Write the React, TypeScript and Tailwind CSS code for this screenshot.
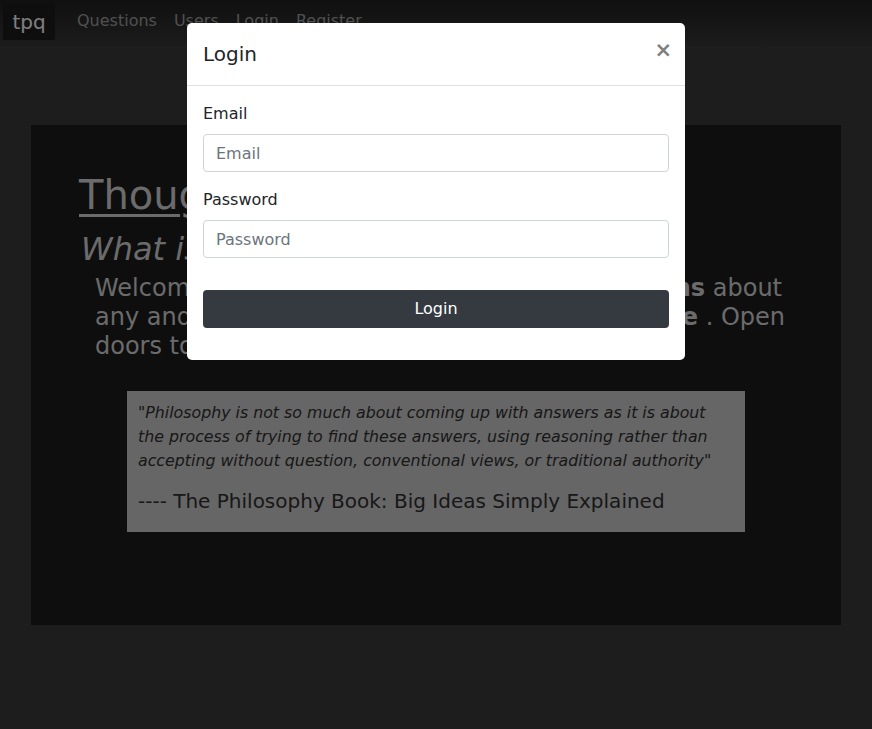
import React from "react";

export default function App() {
  const font = { fontFamily: '"DejaVu Sans", sans-serif' };
  return (
    <div className="relative min-h-[729px] bg-[#3a3a3a]" style={font}>
      {/* Navbar */}
      <nav className="flex h-[46px] items-start bg-gradient-to-b from-[#202020] to-[#383838] pl-[3px] pt-[3px]">
        <div className="flex h-[37px] w-[52px] items-center justify-center bg-[#1c1c1c] text-[20px] text-white">
          tpq
        </div>
        <div className="ml-[22px] flex items-center gap-[17px] pt-[6px] text-[16px] font-medium leading-[24px] text-[#a0a0a0]">
          <span>Questions</span>
          <span>Users</span>
          <span>Login</span>
          <span>Register</span>
        </div>
      </nav>

      {/* Jumbotron */}
      <div className="mx-[31px] mt-[79px] h-[500px] bg-[#1c1c1c] pt-[46px] text-[#d6d6d6]">
        <h1 className="pl-[48px] text-[40px] leading-[48px] underline decoration-[3px] underline-offset-[5px]">
          Thought Provoking Questions
        </h1>
        <h2 className="mt-[11px] pl-[50px] text-[32px] italic leading-[38px]">What is tpq?</h2>
        <div className="mt-[6px] pl-[64px] text-[24px] leading-[28.8px]">
          <div className="flex w-[687px] justify-between whitespace-nowrap">
            <span>Welcome to tpq. Ask deep</span>
            <span>
              <b>questions</b> about
            </span>
          </div>
          <div className="flex w-[690px] justify-between whitespace-nowrap">
            <span>any and every topic, join the</span>
            <span>
              <b>discourse</b> . Open
            </span>
          </div>
          <div className="whitespace-nowrap">doors to new ways of thinking.</div>
        </div>
        <div className="mx-auto mt-[31px] w-[618px] bg-[#cccccc] pb-[16px] pl-[11px] pt-[10px] text-[#303030]">
          <p className="whitespace-nowrap text-[15.8px] italic leading-[24px]">
            "Philosophy is not so much about coming up with answers as it is about
            <br />
            the process of trying to find these answers, using reasoning rather than
            <br />
            accepting without question, conventional views, or traditional authority"
          </p>
          <p className="mt-[13px] whitespace-nowrap text-[20px] leading-[30px]">
            ---- The Philosophy Book: Big Ideas Simply Explained
          </p>
        </div>
      </div>

      {/* Backdrop */}
      <div className="absolute inset-0 bg-black/50" />

      {/* Modal */}
      <div className="absolute left-[187px] top-[23px] w-[498px] rounded-[5px] bg-white text-[#212529]">
        <div className="flex items-center justify-between border-b border-[#dee2e6] px-[16px] py-[16px]">
          <h5 className="text-[20px] leading-[30px]">Login</h5>
          <span className="-mr-[3px] -mt-[8px] text-[21px] font-bold leading-[24px] text-[#7f7f7f]">×</span>
        </div>
        <div className="px-[16px] pb-[32px] pt-[16px]">
          <label className="block text-[16px] leading-[24px]">Email</label>
          <input
            className="mt-[8px] block h-[38px] w-full rounded-[4px] border border-[#ced4da] px-[12px] text-[16px] placeholder:text-[#6c757d]"
            style={font}
            placeholder="Email"
          />
          <label className="mt-[16px] block text-[16px] leading-[24px]">Password</label>
          <input
            className="mt-[8px] block h-[38px] w-full rounded-[4px] border border-[#ced4da] px-[12px] text-[16px] placeholder:text-[#6c757d]"
            style={font}
            placeholder="Password"
          />
          <button
            className="mt-[32px] block h-[38px] w-full rounded-[4px] bg-[#343a40] text-[16px] text-white"
            style={font}
          >
            Login
          </button>
        </div>
      </div>
    </div>
  );
}
